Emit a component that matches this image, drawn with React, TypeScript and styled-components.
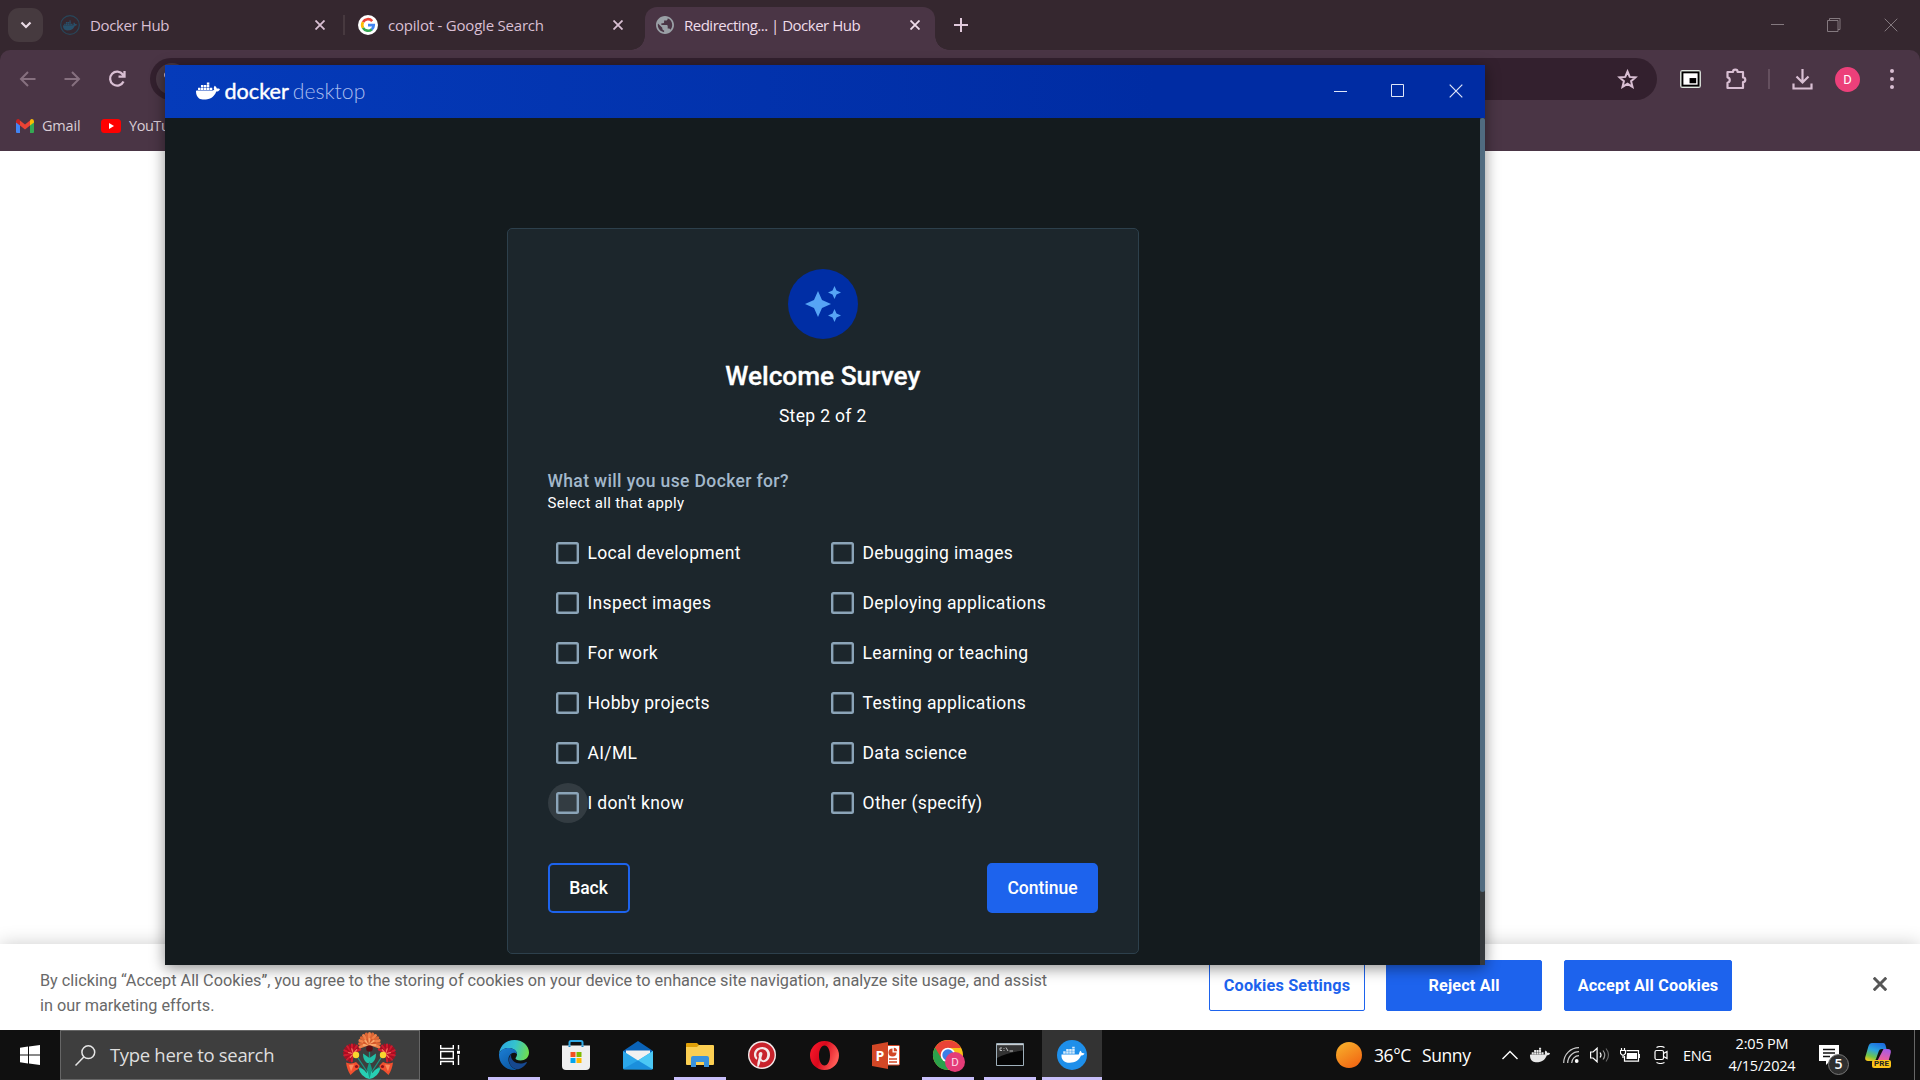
import React from "react";
import styled, { createGlobalStyle, css } from "styled-components";
import { SiDocker } from "react-icons/si";
import { FaPinterest } from "react-icons/fa";

const UI = `"Open Sans", "Noto Sans", sans-serif`;
const RB = `Roboto, "Liberation Sans", sans-serif`;

const Global = createGlobalStyle`
  * { box-sizing: border-box; }
  html, body { margin: 0; padding: 0; background: #fff; }
  body { width: 1920px; height: 1080px; overflow: hidden; }
  svg { display: block; flex: none; }
`;

const Desktop = styled.div`
  position: relative;
  width: 1920px;
  height: 1080px;
  display: flex;
  flex-direction: column;
  overflow: hidden;
  background: #fff;
  font-family: ${UI};
`;

/* ---------- browser ---------- */
const TabStrip = styled.div`
  height: 50px;
  flex: none;
  display: flex;
  align-items: center;
  padding-left: 8px;
  background: #35272f;
`;
const TabSearch = styled.div`
  width: 35px;
  height: 34px;
  border-radius: 11px;
  background: #463a3f;
  display: flex;
  align-items: center;
  justify-content: center;
`;
const Tab = styled.div<{ $w: number; $pad: number; $active?: boolean }>`
  position: relative;
  width: ${(p) => p.$w}px;
  height: 50px;
  padding-left: ${(p) => p.$pad}px;
  display: flex;
  align-items: center;
  color: ${(p) => (p.$active ? "#efdcea" : "#d9bfd3")};
  ${(p) =>
    p.$active &&
    css`
      height: 43px;
      align-self: flex-end;
      padding-bottom: 8px;
      border-radius: 12px 12px 0 0;
      background: #4a3545;
      &::before,
      &::after {
        content: "";
        position: absolute;
        bottom: 0;
        width: 14px;
        height: 14px;
      }
      &::before {
        left: -14px;
        background: radial-gradient(circle at 0 0, transparent 13.5px, #4a3545 14px);
      }
      &::after {
        right: -14px;
        background: radial-gradient(circle at 100% 0, transparent 13.5px, #4a3545 14px);
      }
    `}
`;
const TabTitle = styled.span<{ $w: number; $ls?: number }>`
  width: ${(p) => p.$w}px;
  margin-left: 10px;
  font-size: 15px;
  line-height: 20px;
  letter-spacing: ${(p) => p.$ls ?? 0}px;
  white-space: nowrap;
`;
const TabDivider = styled.div`
  width: 2px;
  height: 20px;
  margin: 0 13px 0 17px;
  background: #47393f;
`;
const NewTab = styled.div`
  margin-left: 19px;
`;
const WinButtons = styled.div<{ $gap: number; $right: number }>`
  margin-left: auto;
  padding-right: ${(p) => p.$right}px;
  display: flex;
  align-items: center;
  gap: ${(p) => p.$gap}px;
`;
const Toolbar = styled.div`
  height: 58px;
  flex: none;
  display: flex;
  align-items: center;
  padding: 0 20px 0 18px;
  background: #4a3545;
  border-radius: 10px 10px 0 0;
  color: #d9bfd3;
`;
const ToolbarWrap = styled.div`
  flex: none;
  background: linear-gradient(#35272f 20px, #4a3545 20px);
`;
const Nav = styled.div`
  display: flex;
  gap: 25px;
  width: 132px;
`;
const AddressBar = styled.div`
  width: 1507px;
  height: 42px;
  border-radius: 21px;
  background: #33202e;
  display: flex;
  align-items: center;
  justify-content: space-between;
  padding: 0 19px 0 6px;
`;
const SiteInfo = styled.div`
  width: 32px;
  height: 32px;
  border-radius: 50%;
  background: #493844;
  display: flex;
  align-items: center;
  justify-content: center;
`;
const Actions = styled.div`
  display: flex;
  align-items: center;
  margin-left: 23px;
`;
const Slot = styled.div<{ $ml: number }>`
  margin-left: ${(p) => p.$ml}px;
`;
const ActionDivider = styled.div`
  width: 2px;
  height: 20px;
  margin-left: 21px;
  background: #65505f;
`;
const Avatar = styled.div`
  width: 25px;
  height: 25px;
  margin-left: 22px;
  border-radius: 50%;
  background: #ec407a;
  color: #fff;
  font: 13px/25px ${RB};
  text-align: center;
`;
const Bookmarks = styled.div`
  height: 43px;
  flex: none;
  display: flex;
  align-items: center;
  padding: 0 0 8px 16px;
  background: #4a3545;
  color: #d9cdd6;
  font-size: 14.5px;
`;
const BookmarkLabel = styled.span<{ $w?: number; $ls?: number }>`
  margin: 0 0 1px 8px;
  width: ${(p) => p.$w ?? 60}px;
  letter-spacing: ${(p) => p.$ls ?? -0.2}px;
`;

/* ---------- cookie banner ---------- */
const PageArea = styled.div`
  flex: 1;
  display: flex;
  flex-direction: column;
  justify-content: flex-end;
  background: #fff;
  overflow: hidden;
`;
const Banner = styled.div`
  height: 86px;
  display: flex;
  padding: 16px 33px 0 40px;
  background: #fff;
  box-shadow: 0 0 18px rgba(0, 0, 0, 0.2);
  font-family: ${RB};
`;
const BannerText = styled.p`
  width: 1050px;
  margin: 8px 119px 0 0;
  color: #696969;
  font-size: 16.25px;
  line-height: 25px;
  white-space: nowrap;
`;
const BannerButton = styled.div<{ $w: number; $ml?: number; $outline?: boolean }>`
  width: ${(p) => p.$w}px;
  height: 51px;
  margin-left: ${(p) => p.$ml ?? 0}px;
  border: 1px solid #1d63ed;
  border-radius: 2px;
  background: ${(p) => (p.$outline ? "#fff" : "#1d63ed")};
  color: ${(p) => (p.$outline ? "#1d63ed" : "#fff")};
  font-size: 16.25px;
  font-weight: 700;
  letter-spacing: 0.15px;
  line-height: 49px;
  text-align: center;
  white-space: nowrap;
`;
const BannerClose = styled.div`
  margin: 17px 0 0 auto;
`;

/* ---------- docker window ---------- */
const DockerWindow = styled.div`
  position: absolute;
  left: 165px;
  top: 65px;
  width: 1320px;
  height: 900px;
  display: flex;
  flex-direction: column;
  background: #141b1e;
  box-shadow: 0 3px 14px rgba(0, 0, 0, 0.45);
  font-family: ${RB};
`;
const TitleBar = styled.div`
  height: 53px;
  flex: none;
  display: flex;
  align-items: center;
  padding: 0 0 2px 31px;
  background: linear-gradient(90deg, #053bba, #002ca3 75%);
  color: #fff;
`;
const Brand = styled.span<{ $light?: boolean }>`
  margin-left: ${(p) => (p.$light ? 4 : 4.5)}px;
  font-family: Lato, sans-serif;
  font-size: ${(p) => (p.$light ? 21.2 : 21.6)}px;
  line-height: 26px;
  font-weight: ${(p) => (p.$light ? 300 : 400)};
  -webkit-text-stroke: ${(p) => (p.$light ? "0" : "0.4px #fff")};
  color: ${(p) => (p.$light ? "#a9bdee" : "#fff")};
`;
const Body = styled.div`
  flex: 1;
  display: flex;
  justify-content: space-between;
  padding-left: 342px;
`;
const ScrollTrack = styled.div`
  width: 5px;
  background: #35393c;
`;
const ScrollThumb = styled.div`
  height: 774px;
  border-radius: 3px;
  background: #506b80;
`;
const Card = styled.div`
  width: 632px;
  height: 726px;
  margin-top: 110px;
  padding: 40px 40px 0 39.5px;
  display: flex;
  flex-direction: column;
  border: 1px solid #2d404c;
  border-radius: 5px;
  background: #1c262c;
  color: #fff;
  letter-spacing: 0.34px;
`;
const Badge = styled.div`
  width: 70px;
  height: 70px;
  align-self: center;
  border-radius: 50%;
  background: #002ea5;
`;
const Title = styled.h1`
  margin: 19px 0 0;
  font-size: 26.25px;
  line-height: 36px;
  font-weight: 500;
  letter-spacing: 0;
  text-align: center;
  -webkit-text-stroke: 0.3px #fff;
`;
const Step = styled.div`
  margin-top: 10px;
  font-size: 17.5px;
  line-height: 24px;
  text-align: center;
`;
const Question = styled.div`
  margin-top: 41px;
  font-size: 17.5px;
  line-height: 24px;
  font-weight: 500;
  letter-spacing: 0.37px;
  color: #a3b8cb;
`;
const Hint = styled.div`
  font-size: 15px;
  line-height: 20px;
`;
const Options = styled.div`
  margin-top: 15px;
  display: grid;
  grid-template-columns: 275px 275px;
  grid-auto-rows: 50px;
`;
const Option = styled.div`
  display: flex;
  align-items: center;
  font-size: 17.5px;
  white-space: nowrap;
`;
const CheckArea = styled.div<{ $hover?: boolean }>`
  width: 40px;
  height: 40px;
  border-radius: 50%;
  display: flex;
  align-items: center;
  justify-content: center;
  background: ${(p) => (p.$hover ? "#333c42" : "transparent")};
`;
const CheckBox = styled.div`
  width: 22.5px;
  height: 22.5px;
  border-radius: 2.5px;
  box-shadow: inset 0 0 0 2.4px #8ba4b8;
`;
const Footer = styled.div`
  margin-top: 35px;
  display: flex;
  justify-content: space-between;
`;
const Button = styled.div<{ $w: number; $primary?: boolean }>`
  width: ${(p) => p.$w}px;
  height: 50px;
  border: 2px solid #1d63ed;
  border-radius: 5px;
  background: ${(p) => (p.$primary ? "#1d63ed" : "transparent")};
  font-size: 17.5px;
  font-weight: 500;
  letter-spacing: 0;
  line-height: 46px;
  text-align: center;
`;

/* ---------- taskbar ---------- */
const Taskbar = styled.div`
  height: 50px;
  flex: none;
  display: flex;
  align-items: center;
  background: #101010;
  color: #fff;
`;
const Start = styled.div`
  width: 60px;
  padding-left: 20px;
`;
const SearchBox = styled.div`
  width: 360px;
  height: 50px;
  padding: 0 21px 0 14px;
  display: flex;
  align-items: center;
  border: 1px solid #666;
  background: #3e3e3e;
`;
const SearchText = styled.span`
  margin: 0 auto 2px 14px;
  color: #dedede;
  font-size: 18.5px;
  letter-spacing: -0.32px;
`;
const TaskView = styled.div`
  width: 63px;
  padding-left: 20px;
`;
const TaskItem = styled.div<{ $running?: boolean; $active?: boolean }>`
  width: ${(p) => (p.$active ? 60 : 52)}px;
  height: 50px;
  margin-left: ${(p) => (p.$active ? 6 : 10)}px;
  display: flex;
  align-items: center;
  justify-content: center;
  border-bottom: 3px solid ${(p) => (p.$running ? "#c8bffa" : "transparent")};
  border-top: 3px solid transparent;
  background: ${(p) => (p.$active ? "#333" : "none")};
`;
const Apps = styled.div`
  display: flex;
  margin-left: -5px;
`;
const Tray = styled.div`
  margin-left: auto;
  width: 584px;
  display: flex;
  align-items: center;
`;
const Weather = styled.div`
  width: 128px;
  margin-left: 12px;
  display: flex;
  gap: 11px;
  font-size: 17.5px;
  letter-spacing: -0.4px;
  white-space: nowrap;
`;
const Lang = styled.div`
  width: 30px;
  margin-left: 15px;
  font-size: 14.5px;
  letter-spacing: -0.3px;
`;
const Clock = styled.div`
  width: 80px;
  margin-left: 9px;
  font-size: 14.5px;
  line-height: 22px;
  letter-spacing: -0.2px;
  text-align: center;
  white-space: nowrap;
`;
const Notify = styled.div`
  position: relative;
  margin-left: 17px;
`;
const NotifyCount = styled.div`
  position: absolute;
  left: 9px;
  top: 9px;
  width: 21px;
  height: 21px;
  border: 1px solid #777;
  border-radius: 50%;
  background: #2f2f2f;
  font-size: 14px;
  font-weight: 600;
  line-height: 18px;
  text-align: center;
`;
const Copilot = styled.div`
  position: relative;
  width: 28px;
  margin-left: 26px;
`;
const Pre = styled.div`
  position: absolute;
  left: 7px;
  top: 18px;
  width: 19px;
  height: 8px;
  border-radius: 2px;
  background: #fcc419;
  color: #222;
  font: 700 8px/8px ${RB};
  text-align: center;
`;
const ShowDesktop = styled.div`
  width: 1px;
  height: 50px;
  margin: 0 5px 0 auto;
  background: #666;
`;

/* ---------- icons ---------- */
const Cross = ({ s = 10, w = 1.8, c = "currentColor" }) => (
  <svg width={s} height={s} viewBox="0 0 10 10" stroke={c} strokeWidth={(w * 10) / s} fill="none">
    <path d="M.5.5l9 9M9.500.5l-9 9" />
  </svg>
);
const GoogleIcon = () => (
  <svg width="20" height="20" viewBox="0 0 20 20" fill="none">
    <circle cx="10" cy="10" r="10" fill="#fff" />
    <g strokeWidth="2.700">
      <path d="M5 7.100A5.700 5.700 0 0 1 14.200 6.100" stroke="#ea4335" />
      <path d="M5 12.900A5.800 5.800 0 0 1 5 7.100" stroke="#fbbc05" />
      <path d="M13.900 14.200A5.800 5.800 0 0 1 5 12.900" stroke="#34a853" />
      <path d="M10 10.200H15.700A5.700 5.700 0 0 1 13.700 14.400" stroke="#4285f4" />
    </g>
  </svg>
);
const GlobeIcon = () => (
  <svg width="18" height="18" viewBox="2 2 20 20" fill="#9aa0a6">
    <path d="M12 2C6.480 2 2 6.480 2 12s4.480 10 10 10 10-4.480 10-10S17.520 2 12 2zm-1 17.930c-3.950-.49-7-3.850-7-7.930 0-.62.080-1.210.21-1.790L9 15v1c0 1.100.9 2 2 2v1.930zm6.900-2.540c-.26-.81-1-1.390-1.900-1.390h-1v-3c0-.55-.45-1-1-1H8v-2h2c.55 0 1-.45 1-1V7h2c1.100 0 2-.9 2-2v-.41c2.930 1.190 5 4.060 5 7.410 0 2.080-.8 3.970-2.100 5.390z" />
  </svg>
);
const Whale = ({ s, c }: { s: number; c: string }) => <SiDocker size={s} color={c} />;

const EdgeIcon = () => (
  <svg width="30" height="30" viewBox="0 0 30 30">
    <defs>
      <linearGradient id="e1" x1="0" y1="0.3" x2="1" y2="0.5">
        <stop offset="0" stopColor="#2aa6e3" />
        <stop offset=".5" stopColor="#35c3cd" />
        <stop offset="1" stopColor="#6edc50" />
      </linearGradient>
      <linearGradient id="e2" x1="0" y1="0" x2="0.6" y2="1">
        <stop offset="0" stopColor="#1c7fd6" />
        <stop offset="1" stopColor="#0c59a4" />
      </linearGradient>
    </defs>
    <path d="M0 14C1 5 8 0 15.500 0 24 0 30 6 30 12.500c0 5-4 8-8.500 8-3.500 0-5-1.200-5-2.200 0-.8 1.500-1.500 1.500-4C18 10.500 14 8 9.500 8 5 8 1.500 10.500 0 14z" fill="url(#e1)" />
    <path d="M0 14C1.500 10 5.500 8 9.500 8c4.500 0 8.300 2.200 8.500 6-1-1-2.200-1.300-3-1.300-3 0-5.500 3-5.500 6.800 0 5 4 9 8 10.200-1 .2-1.700.3-2.500.3C6.500 30 0 23.500 0 15z" fill="url(#e2)" />
    <path d="M12.500 14c-2 2-2.800 4-2.500 7 .5 5 5 8.500 9.500 8.300 3.500-1.200 6.500-3.500 8.200-6.300.4-.7-.2-1.200-.9-.8-1.500.8-3.500 1.300-5.300 1.300-5.500 0-9.500-3.500-9.500-8z" fill="#16488f" />
  </svg>
);
const StoreIcon = () => (
  <svg width="30" height="30" viewBox="0 0 30 30">
    <path d="M8.500 7V2.500q0-1.500 1.500-1.500h10q1.500 0 1.500 1.500V7" fill="none" stroke="#2fa9e6" strokeWidth="2" />
    <path d="M1 5.500h28V26q0 4-4 4H5q-4 0-4-4z" fill="#efefef" />
    <path d="M9.500 12h5v5h-5z" fill="#f25022" />
    <path d="M15.500 12h5v5h-5z" fill="#7fba00" />
    <path d="M9.500 18h5v5h-5z" fill="#00a4ef" />
    <path d="M15.500 18h5v5h-5z" fill="#ffb900" />
    <path d="M8.500 5.500V7M21.500 5.500V7" stroke="#1583c4" strokeWidth="2" />
  </svg>
);
const MailIcon = () => (
  <svg width="30" height="29" viewBox="0 0 30 29">
    <path d="M0 10L15 0l15 10v5H0z" fill="#0a63b8" />
    <path d="M3 9.500h24v8L15 22 3 17z" fill="#f1f1f1" />
    <path d="M0 10l15 9.500L30 10v17q0 1.500-1.500 1.500h-27Q0 28.500 0 27z" fill="#2ba7ea" />
    <path d="M30 10L15 19.500 29.500 28q.5-.4.500-1z" fill="#4bc8f5" />
    <path d="M0 28L15 19.500l14.500 9z" fill="#1b8fdc" />
  </svg>
);
const FolderIcon = () => (
  <svg width="28" height="24" viewBox="0 0 28 24">
    <path d="M1 0h10l3 3H27v3H0V1q0-1 1-1z" fill="#e0a008" />
    <path d="M0 4h11l2-2h14q1 0 1 1v18q0 1-1 1H1q-1 0-1-1z" fill="#fccf52" />
    <path d="M5 24V15q0-2 2-2h14q2 0 2 2v9h-5v-5h-8v5z" fill="#3a93dd" />
  </svg>
);
const OperaIcon = () => (
  <svg width="29" height="29" viewBox="0 0 29 29">
    <defs>
      <linearGradient id="op" x1="0" y1="0" x2="1" y2="0.4">
        <stop offset="0" stopColor="#ff1b2d" />
        <stop offset=".5" stopColor="#d8081c" />
        <stop offset="1" stopColor="#ff5a55" />
      </linearGradient>
    </defs>
    <path fillRule="evenodd" d="M14.500 0a14.500 14.500 0 1 0 0 29 14.500 14.500 0 1 0 0-29zm0 4.500c3.300 0 5.500 4.500 5.500 10s-2.200 10-5.500 10S9 20 9 14.500s2.200-10 5.500-10z" fill="url(#op)" />
  </svg>
);
const PptIcon = () => (
  <svg width="28" height="27" viewBox="0 0 28 27">
    <path d="M15 3.500h11.500q1 0 1 1v17.500q0 1-1 1H15z" fill="#fff" stroke="#d24726" />
    <path d="M17 17h8M17 20h8" stroke="#d24726" strokeWidth="1.400" />
    <circle cx="20.500" cy="10.500" r="4" fill="#d24726" />
    <path d="M20.500 10.500V5.500H26v5z" fill="#fff" />
    <path d="M21.800 9.200V5.800a3.600 3.600 0 0 1 3.400 3.400z" fill="#d24726" />
    <path d="M0 3l16-3v27L0 24z" fill="#d24726" />
    <text x="8" y="18.500" textAnchor="middle" fontFamily="Open Sans" fontWeight="700" fontSize="14" fill="#fff">P</text>
  </svg>
);
const ChromeIcon = () => (
  <svg width="32" height="32" viewBox="-1 -1 32 32" overflow="visible">
    <circle cx="15" cy="15" r="15" fill="#fbc116" />
    <path d="M2 7.500A15 15 0 0 0 15 30l6.500-11.500L15 15z" fill="#2ba24c" />
    <path d="M2 7.500l6.500 11L15 8h13A15 15 0 0 0 2 7.500z" fill="#ea4335" />
    <circle cx="15" cy="15" r="7.300" fill="#fff" />
    <circle cx="15" cy="15" r="5.700" fill="#3c7de6" />
    <circle cx="22" cy="22" r="10" fill="#e43c78" />
    <text x="22" y="26" textAnchor="middle" fontFamily="Roboto" fontSize="11.500" fill="#fbdde8">D</text>
  </svg>
);
const CmdIcon = () => (
  <svg width="28" height="25" viewBox="0 0 28 25">
    <path d="M.5.5h27v22H.5z" fill="#050505" stroke="#9fb0bb" />
    <path d="M1 1h26v1.500H1z" fill="#c8ced2" />
    <path d="M1 2.500h26v5Q12 9 1 15z" fill="#333" />
    <path d="M6 5H4v2.500h2M8 5v.8M8 7v.8M10 4.500l2 3.500M13.500 8H17" stroke="#bbb" fill="none" />
  </svg>
);
const DockerAppIcon = () => (
  <svg width="30" height="30" viewBox="0 0 30 30">
    <circle cx="15" cy="15" r="15" fill="#1e8fea" />
    <path d="M4.500 14.500h17.200c.6-.8.5-2.600 1.600-3.800 1 .7 1.500 1.700 1.500 2.400 1-.2 2 0 2.700.4-.6 1.500-2 2.100-3.500 2.100C22 20.500 18 22.800 12.800 22.800 7 22.800 4 19.500 4.500 14.500z" fill="#fff" />
    <path d="M6.200 11.200h2.500v2.500H6.200zM9.200 11.200h2.500v2.500H9.200zM12.200 11.200h2.500v2.500h-2.500zM15.200 11.200h2.500v2.500h-2.500zM9.200 9h2.500v2H9.200zM12.200 9h2.500v2h-2.500zM15.200 9h2.500v2h-2.500zM15.200 6.700h2.500v1.800h-2.500z" fill="#d5eafb" />
  </svg>
);

const petals = (cx: number, cy: number, r: number, n: number, from: number, to: number) =>
  Array.from({ length: n }, (_, i) => {
    const a = ((from + ((to - from) * i) / (n - 1)) * Math.PI) / 180;
    return { x: cx + r * Math.cos(a), y: cy + r * Math.sin(a), cx, cy };
  });
const Fan = ({ at, colors, w = 3 }: { at: ReturnType<typeof petals>; colors: [string, string]; w?: number }) => (
  <g strokeWidth={w} strokeLinecap="round">
    {at.map((p, i) => (
      <path key={i} d={`M${p.cx} ${p.cy}L${p.x} ${p.y}`} stroke={colors[i % 2]} />
    ))}
  </g>
);
const SideBloom = () => (
  <g>
    <Fan at={petals(10.500, 22, 8.500, 15, 95, 335)} colors={["#d3182d", "#a90d20"]} w={2.200} />
    <Fan at={petals(11.500, 22.500, 5, 7, 130, 310)} colors={["#f0705c", "#c41428"]} w={1.300} />
    <circle cx="14" cy="24" r="3.200" fill="#f9d62e" />
    <path d="M4 31.500q6 2 10-.5l3.500 3.500q0 4-4 5l-5 4.500q-3.500-5-4.500-12.500z" fill="#f2502f" />
    <path d="M7 34l5-.5-3 7z" fill="#fb8a5c" />
    <circle cx="14.500" cy="35.500" r="1.600" fill="#8e1018" />
  </g>
);
const Flower = () => (
  <svg width="56" height="48" viewBox="0 0 56 48">
    <path d="M27.500 46V20M26 42Q22 36 16 27M29 42Q33 36 39 27M25 44Q21 38 16 35M30 44Q34 38 39 35" stroke="#1a9482" strokeWidth="1.300" fill="none" />
    <SideBloom />
    <g transform="translate(55 0) scale(-1 1)"><SideBloom /></g>
    <Fan at={petals(27.500, 12.500, 10, 13, 160, 380)} colors={["#f08048", "#dc6534"]} w={3} />
    <Fan at={petals(27.500, 14, 6, 9, 180, 360)} colors={["#f9a468", "#d4582a"]} w={1.800} />
    <circle cx="27.500" cy="17.500" r="3.300" fill="#5a0d14" />
    <path d="M21 22.500l6.500 4.500 6.500-4.500q0 7-4 9.500h-5q-4-2.500-4-9.500z" fill="#22bfa6" />
    <path d="M27.500 48q-9-2-11-11 5 0 8 5l3-6 3 6q3-5 8-5-2 9-11 11z" fill="#27d0b4" />
    <path d="M27.500 30l2.500 8-2.500 10-2.500-10z" fill="#159a86" />
  </svg>
);

const left = ["Local development", "Inspect images", "For work", "Hobby projects", "AI/ML", "I don't know"];
const right = ["Debugging images", "Deploying applications", "Learning or teaching", "Testing applications", "Data science", "Other (specify)"];

export default function App() {
  return (
    <Desktop>
      <Global />
      <TabStrip>
        <TabSearch>
          <svg width="12" height="8" viewBox="0 0 12 8" fill="none" stroke="#eadbe6" strokeWidth="2.200"><path d="M1.500 1.500L6 6l4.500-4.500" /></svg>
        </TabSearch>
        <Tab $w={283} $pad={17}>
          <svg width="20" height="20" viewBox="0 0 20 20">
            <circle cx="10" cy="10" r="9.300" fill="none" stroke="#28465a" strokeWidth="1.200" />
            <g transform="translate(3 3.500)" color="#28506a"><SiDocker size={14} /></g>
          </svg>
          <TabTitle $w={225} $ls={-0.38}>Docker Hub</TabTitle>
          <Cross />
        </Tab>
        <TabDivider />
        <Tab $w={287} $pad={0}>
          <GoogleIcon />
          <TabTitle $w={225} $ls={-0.21}>copilot - Google Search</TabTitle>
          <Cross />
        </Tab>
        <Tab $w={290} $pad={11} $active>
          <GlobeIcon />
          <TabTitle $w={226} $ls={-0.5}>Redirecting... | Docker Hub</TabTitle>
          <Cross />
        </Tab>
        <NewTab>
          <svg width="14" height="14" viewBox="0 0 14 14" stroke="#e0c9db" strokeWidth="2"><path d="M7 0v14M0 7h14" /></svg>
        </NewTab>
        <WinButtons $gap={43} $right={22}>
          <svg width="13" height="14" viewBox="0 0 13 14" stroke="#84797f"><path d="M0 6.500h13" /></svg>
          <svg width="14" height="14" viewBox="0 0 14 14" stroke="#84797f" fill="none"><path d="M.5 2.500h10.500v11H.5zM2.500 2.500V.5H13v11h-2" /></svg>
          <Cross s={14} w={1} c="#84797f" />
        </WinButtons>
      </TabStrip>
      <ToolbarWrap>
        <Toolbar>
          <Nav>
            <svg width="20" height="20" viewBox="0 0 20 20" fill="none" stroke="#86707f" strokeWidth="2"><path d="M17.500 10H3M10 3l-7 7 7 7" /></svg>
            <svg width="20" height="20" viewBox="0 0 20 20" fill="none" stroke="#86707f" strokeWidth="2"><path d="M1.500 10H16M9 3l7 7-7 7" /></svg>
            <svg width="20" height="20" viewBox="0 0 20 20" fill="none" stroke="#d9bfd3" strokeWidth="2.300"><path d="M15.500 12.500A7 7 0 1 1 14.800 5.500L16 7M16.500 2v5.700H10.500" /></svg>
          </Nav>
          <AddressBar>
            <SiteInfo>
              <svg width="16" height="16" viewBox="0 0 16 16" fill="none" stroke="#d9bfd3" strokeWidth="2"><path d="M6 4h9M1 12h8" /><circle cx="3" cy="4" r="2" /><circle cx="12" cy="12" r="2" /></svg>
            </SiteInfo>
            <svg width="21" height="20" viewBox="0 0 21 20" fill="none" stroke="#d9bfd3" strokeWidth="2"><path d="M10.500 2.500l2.200 5.400 5.800.5-4.400 3.800 1.400 5.700-5-3.100-5 3.100 1.400-5.700L2.500 8.400l5.800-.5z" /></svg>
          </AddressBar>
          <Actions>
            <svg width="21" height="18" viewBox="0 0 22 19"><rect width="22" height="19" rx="2.500" fill="#dfe8e0" /><rect x="1.500" y="1.500" width="19" height="16" fill="#000" /><rect x="3.500" y="3.500" width="15" height="12" fill="#fff" /><rect x="10" y="8.500" width="7" height="5.500" fill="#000" /></svg>
            <Slot $ml={24}>
              <svg width="22" height="22" viewBox="0 0 22 22" fill="none" stroke="#d9bfd3" strokeWidth="2.200" strokeLinejoin="round"><path d="M2.500 4H8a2.300 2.300 0 0 1 4.600 0H18v5.500a2.300 2.300 0 0 1 0 4.600V20H2.500v-5.200a2.800 2.800 0 0 0 0-5.500z" /></svg>
            </Slot>
            <ActionDivider />
            <Slot $ml={22}>
              <svg width="21" height="21" viewBox="0 0 21 21" fill="none" stroke="#d9bfd3" strokeWidth="2.200"><path d="M10.500 0v13M4.500 7.500l6 6 6-6M1.500 14.500v5h18v-5" /></svg>
            </Slot>
            <Avatar>D</Avatar>
            <Slot $ml={30}>
              <svg width="4" height="20" viewBox="0 0 4 20" fill="#d9bfd3"><circle cx="2" cy="2" r="2" /><circle cx="2" cy="10" r="2" /><circle cx="2" cy="18" r="2" /></svg>
            </Slot>
          </Actions>
        </Toolbar>
      </ToolbarWrap>
      <Bookmarks>
        <svg width="18" height="14" viewBox="0 0 18 14"><path d="M0 2v11q0 1 1 1h3V5z" fill="#4285f4" /><path d="M18 2v11q0 1-1 1h-3V5z" fill="#34a853" /><path d="M4 1.500L9 5.500l5-4V6.500l-5 4-5-4z" fill="#ea4335" /><path d="M0 2.500Q0 0 2 0 3 0 4 1.200V6.500L0 3.500z" fill="#c5221f" /><path d="M18 2.500Q18 0 16 0 15 0 14 1.200V6.500l4-3z" fill="#fbbc04" /></svg>
        <BookmarkLabel $w={59}>Gmail</BookmarkLabel>
        <svg width="20" height="14" viewBox="0 0 20 14"><rect width="20" height="14" rx="3.500" fill="#f00" /><path d="M8 4l5 3-5 3z" fill="#fff" /></svg>
        <BookmarkLabel $ls={-0.45}>YouTube</BookmarkLabel>
      </Bookmarks>

      <PageArea>
        <Banner>
          <BannerText>
            By clicking “Accept All Cookies”, you agree to the storing of cookies on your device to enhance site navigation, analyze site usage, and assist
            <br />
            in our marketing efforts.
          </BannerText>
          <BannerButton $w={156} $outline>Cookies Settings</BannerButton>
          <BannerButton $w={156} $ml={21}>Reject All</BannerButton>
          <BannerButton $w={168} $ml={22}>Accept All Cookies</BannerButton>
          <BannerClose><Cross s={14} w={3} c="#565656" /></BannerClose>
        </Banner>
      </PageArea>

      <Taskbar>
        <Start>
          <svg width="20" height="20" viewBox="0 0 20 20" fill="#fff"><path d="M0 2.700L8 1.600V9.500H0zM9 1.400L20 0v9.500H9zM0 10.500h8v7.900L0 17.300zM9 10.500h11V20L9 18.600z" /></svg>
        </Start>
        <SearchBox>
          <svg width="21" height="21" viewBox="0 0 21 21" fill="none" stroke="#e6e6e6" strokeWidth="1.500"><circle cx="13.300" cy="7.200" r="6.400" /><path d="M8.800 12L.5 20.500" /></svg>
          <SearchText>Type here to search</SearchText>
          <Flower />
        </SearchBox>
        <TaskView>
          <svg width="20" height="20" viewBox="0 0 20 20" fill="none" stroke="#fff" strokeWidth="1.400"><path d="M.7 0v3.500h12.600V0M.7 6.500h12.600v7H.7zM.7 20v-3.500h12.600V20M18.500 0v4.500M18.500 10v10" /><path d="M17 5.800h3v3h-3z" fill="#fff" stroke="none" /></svg>
        </TaskView>
        <Apps>
          <TaskItem $running><EdgeIcon /></TaskItem>
          <TaskItem><StoreIcon /></TaskItem>
          <TaskItem><MailIcon /></TaskItem>
          <TaskItem $running><FolderIcon /></TaskItem>
          <TaskItem>
            <svg width="28" height="28" viewBox="0 0 28 28"><circle cx="14" cy="14" r="14" fill="#f4e9ea" /><g transform="translate(1 1)" color="#c8232c"><FaPinterest size={26} /></g></svg>
          </TaskItem>
          <TaskItem><OperaIcon /></TaskItem>
          <TaskItem><PptIcon /></TaskItem>
          <TaskItem $running><ChromeIcon /></TaskItem>
          <TaskItem $running><CmdIcon /></TaskItem>
          <TaskItem $running $active><DockerAppIcon /></TaskItem>
        </Apps>
        <Tray>
          <svg width="26" height="26" viewBox="0 0 26 26"><defs><linearGradient id="sun" x1="0" y1="0" x2=".6" y2="1"><stop offset="0" stopColor="#f8b62d" /><stop offset="1" stopColor="#f26a14" /></linearGradient></defs><circle cx="13" cy="13" r="13" fill="url(#sun)" /></svg>
          <Weather><span>36°C</span><span>Sunny</span></Weather>
          <svg width="16" height="10" viewBox="0 0 16 10" fill="none" stroke="#fff" strokeWidth="1.400"><path d="M.5 9L8 1.500 15.500 9" /></svg>
          <Slot $ml={12}><Whale s={20} c="#e8e8e8" /></Slot>
          <Slot $ml={13}>
            <svg width="16" height="16" viewBox="0 0 16 16" fill="none" stroke="#ccc" strokeWidth="1.200"><path d="M.7 16A15.300 15.300 0 0 1 16 .7M4.700 16A11.300 11.300 0 0 1 16 4.700M8.700 16A7.300 7.300 0 0 1 16 8.700" /><circle cx="13.700" cy="14" r="1.900" fill="#fff" stroke="none" /></svg>
          </Slot>
          <Slot $ml={11}>
            <svg width="20" height="16" viewBox="0 0 20 16" fill="none" stroke="#fff" strokeWidth="1.200"><path d="M.6 5h2.500l4-3.800v13.600l-4-3.800H.6z" /><path d="M10 5.500q2 2.500 0 5" /><path d="M13 3.500q3.500 4.500 0 9" stroke="#999" /><path d="M16 1.500q5 6.500 0 13" stroke="#666" /></svg>
          </Slot>
          <Slot $ml={10}>
            <svg width="20" height="15" viewBox="0 0 20 15" fill="none" stroke="#fff" strokeWidth="1.200"><path d="M6.500 2.600h12v10.500H4.500V8M19.500 6v4" /><path d="M7 5h10v6H6.500z" fill="#fff" stroke="none" /><path d="M.5 2.500h5v3L4 7H2L.5 5.500zM1.500 0v3M4.500 0v3M3 7v3" /></svg>
          </Slot>
          <Slot $ml={14}>
            <svg width="14" height="18" viewBox="0 0 14 18" fill="none" stroke="#fff" strokeWidth="1.200"><rect x="1" y="4.500" width="8.500" height="9" rx="1.500" /><path d="M9.500 7.500l3.500-2v7l-3.500-2M2.500 1.500Q6.500-.5 10.500 1.500M2.500 16.500q4 2 8 0" /></svg>
          </Slot>
          <Lang>ENG</Lang>
          <Clock>2:05 PM<br />4/15/2024</Clock>
          <Notify>
            <svg width="20" height="21" viewBox="0 0 20 21"><path d="M0 0h20v16H11l-4 4v-4H0z" fill="#fff" /><path d="M4 4.500h12M4 8h12M4 11.500h7" stroke="#101010" strokeWidth="1.300" /></svg>
            <NotifyCount>5</NotifyCount>
          </Notify>
          <Copilot>
            <svg width="26" height="26" viewBox="0 0 26 26"><defs><linearGradient id="c1" x1=".6" y1="0" x2=".2" y2="1"><stop offset="0" stopColor="#1d6fe0" /><stop offset=".4" stopColor="#2ba5e0" /><stop offset=".75" stopColor="#6fc54b" /><stop offset="1" stopColor="#f2c81c" /></linearGradient><linearGradient id="c2" x1=".6" y1="0" x2=".4" y2="1"><stop offset="0" stopColor="#a55be8" /><stop offset=".6" stopColor="#ea5fa0" /><stop offset="1" stopColor="#f5873f" /></linearGradient></defs><path d="M7 1h11q2 0 2.500 2l1 4h-5q-2 0-2.700 2L11 17q-.7 2-2.500 2H3q-3.500 0-2.700-4L3.500 4Q4.500 1 7 1z" fill="url(#c1)" /><path d="M18.500 7H23q3.500 0 2.700 4L23 21q-1 3-3.500 3H12q-2 0-1-2.500z" fill="url(#c2)" /></svg>
            <Pre>PRE</Pre>
          </Copilot>
          <ShowDesktop />
        </Tray>
      </Taskbar>

      <DockerWindow>
        <TitleBar>
          <Whale s={24} c="#fff" />
          <Brand>docker</Brand>
          <Brand $light>desktop</Brand>
          <WinButtons $gap={44} $right={22}>
            <svg width="13" height="14" viewBox="0 0 13 14" stroke="#dfe6f8"><path d="M0 7.500h13" /></svg>
            <svg width="13" height="13" viewBox="0 0 13 13" stroke="#dfe6f8" fill="none"><path d="M.5.5h12v12H.5z" /></svg>
            <Slot $ml={1}><Cross s={14} w={1.2} c="#dfe6f8" /></Slot>
          </WinButtons>
        </TitleBar>
        <Body>
          <Card>
            <Badge>
              <svg width="70" height="70" viewBox="0 0 70 70" fill="#56a4f5"><path d="M30 22l4 9 9 4-9 4-4 9-4-9-9-4 9-4z" /><path d="M46.500 17l2 4.500 4.500 2-4.500 2-2 4.500-2-4.500-4.500-2 4.500-2zM46.500 40l2 4.500 4.500 2-4.500 2-2 4.500-2-4.500-4.500-2 4.500-2z" /></svg>
            </Badge>
            <Title>Welcome Survey</Title>
            <Step>Step 2 of 2</Step>
            <Question>What will you use Docker for?</Question>
            <Hint>Select all that apply</Hint>
            <Options>
              {left.map((l, i) => (
                <React.Fragment key={l}>
                  <Option><CheckArea $hover={i === 5}><CheckBox /></CheckArea>{l}</Option>
                  <Option><CheckArea><CheckBox /></CheckArea>{right[i]}</Option>
                </React.Fragment>
              ))}
            </Options>
            <Footer>
              <Button $w={82}>Back</Button>
              <Button $w={111} $primary>Continue</Button>
            </Footer>
          </Card>
          <ScrollTrack><ScrollThumb /></ScrollTrack>
        </Body>
      </DockerWindow>
    </Desktop>
  );
}
